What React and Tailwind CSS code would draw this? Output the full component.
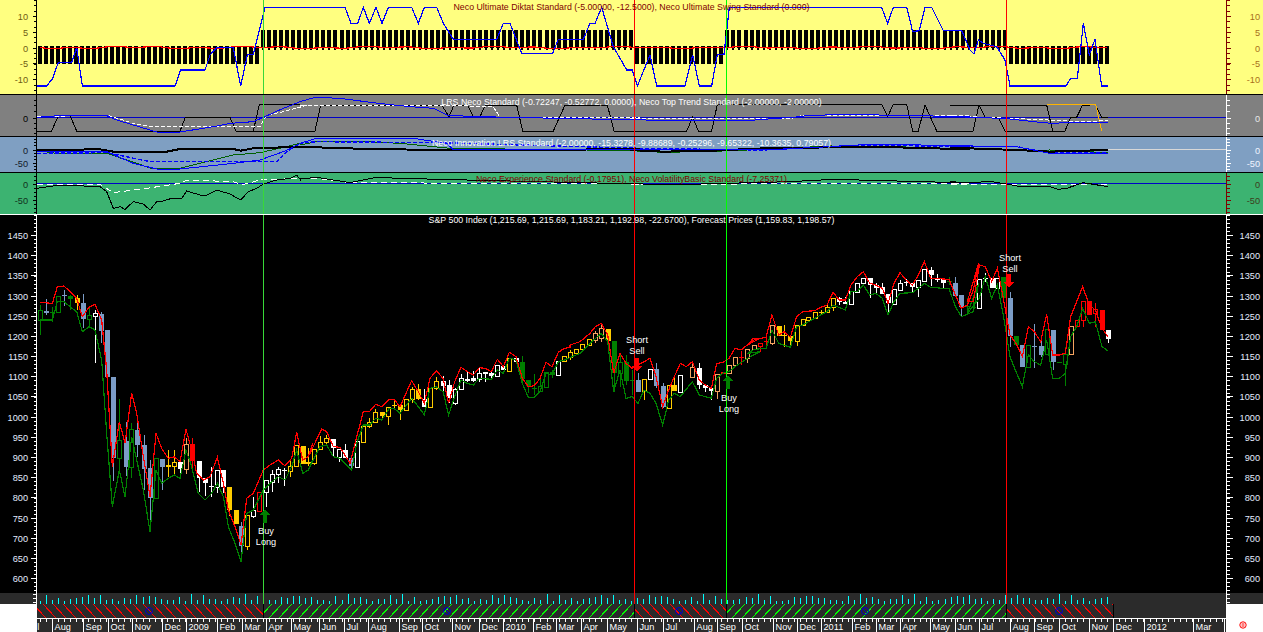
const pts = (ox, oy, a) => a.map(([x, y]) => `${ox + x / 3},${oy + y / 3}`).join(" ");

const VX = [[263, "#38d838"], [634, "#ff0000"], [726, "#00ff00"], [1006, "#ff0000"]];

const Candles = `40 G 310 320 305 335|46 s 311 313 299 315|52 g 312 313 307 322|58 G 296 312 296 312|64 s 295 296 290 306|70 g 296 299 295 310|77 y 298 303 295 310|83 s 303 319 294 328|89 G 315 319 307 328|95 W 313 316 310 363|101 s 314 331 312 343|107 s 330 377 330 377|113 s 377 458 377 481|119 G 440 458 399 470|126 s 441 467 422 476|131 G 429 467 423 478|137 s 430 445 423 457|144 s 445 469 435 490|150 s 468 498 460 522|156 G 458 498 458 498|162 s 459 467 459 490|168 y 465 467 450 477|174 Y 462 466 450 474|180 w 462 469 462 474|186 O 444 469 438 474|192 r 444 461 438 470|199 w 461 478 461 492|205 w 478 483 478 496|211 w 486 487 467 497|217 W 470 487 470 493|223 w 470 487 470 493|229 y 487 510 487 516|236 y 510 524 510 524|241 s 526 546 522 553|247 Y 515 546 515 550|253 W 510 516 497 518|259 R 492 511 492 511|266 W 480 492 480 507|272 W 474 482 470 492|278 W 469 474 467 483|284 w 470 470 468 486|290 Y 466 471 461 477|296 Y 445 466 445 466|303 y 446 464 446 464|308 y 462 464 448 466|314 Y 449 463 449 465|320 Y 442 449 436 449|326 Y 438 442 435 446|333 w 439 448 439 457|339 W 449 457 449 462|345 w 450 458 444 458|351 s 458 466 458 470|357 W 441 467 440 468|363 Y 426 442 426 442|369 Y 422 426 418 428|375 Y 412 422 409 423|382 y 412 416 412 420|388 Y 407 416 407 425|394 y 405 406 401 408|400 y 405 410 405 420|406 Y 399 410 399 410|412 Y 389 399 387 403|418 y 389 399 384 400|424 w 399 407 389 407|430 Y 388 407 388 407|436 Y 381 388 377 390|443 w 381 386 376 395|449 w 385 398 380 403|455 W 389 403 388 405|461 W 378 389 374 390|467 W 379 380 372 382|473 w 378 381 371 382|479 W 373 379 368 382|485 W 372 373 372 382|491 w 373 376 371 379|497 W 365 376 365 376|503 w 366 370 366 370|509 Y 358 371 358 371|516 w 358 362 356 363|522 g 362 379 356 384|528 g 380 386 380 393|534 g 388 389 374 395|540 G 386 391 378 392|546 G 372 387 372 387|552 g 372 375 370 378|558 W 361 375 361 375|564 Y 356 361 356 361|570 Y 352 357 350 360|576 Y 349 353 349 353|582 Y 344 349 344 349|589 Y 339 345 339 345|595 O 333 340 331 343|601 O 328 338 323 342|608 y 329 341 329 341|614 g 341 373 341 392|620 G 362 373 353 387|626 g 362 381 355 385|632 g 380 381 370 395|638 s 380 392 373 392|644 Y 379 391 379 400|650 W 369 379 369 379|656 s 369 386 363 388|663 s 386 407 383 408|669 Y 385 408 385 408|674 y 385 391 377 391|680 W 375 392 375 392|692 O 367 377 363 377|699 w 368 385 363 389|705 w 385 388 385 392|711 w 388 391 388 400|717 O 374 391 374 399|723 r 372 374 372 374|729 O 365 373 365 373|735 O 357 365 357 365|741 r 357 358 351 365|747 O 349 358 349 363|754 O 345 349 345 349|760 R 343 346 343 352|766 r 341 342 337 345|772 O 325 343 325 345|779 y 326 336 326 336|784 y 335 336 325 347|790 y 336 341 336 345|797 Y 325 341 325 346|803 Y 319 325 319 325|808 Y 317 320 317 320|815 Y 312 318 312 318|821 y 312 313 310 315|827 Y 307 312 303 312|833 Y 298 307 298 311|839 w 298 302 297 305|845 w 302 304 297 304|851 W 291 304 291 304|857 W 283 292 283 292|863 W 278 283 278 283|870 w 278 285 278 298|876 w 285 288 283 293|882 w 287 294 283 294|888 w 294 303 294 315|894 W 289 304 289 304|900 W 283 290 280 290|906 w 282 283 279 286|912 w 283 287 283 293|918 W 280 287 280 297|924 W 269 281 269 281|931 w 270 275 267 286|937 w 279 280 274 282|943 w 279 283 279 288|949 g 281 282 277 285|955 s 283 296 277 296|961 s 295 307 295 317|967 g 306 307 298 313|973 g 307 308 302 312|979 W 279 308 279 308|985 w 278 279 273 282|992 w 278 288 278 288|997 W 278 288 278 288|1003 g 277 298 277 298|1010 s 298 336 292 347|1016 g 336 345 336 345|1022 s 345 367 345 367|1028 G 345 367 345 367|1034 s 346 347 324 368|1041 s 346 355 337 357|1047 G 329 354 329 354|1053 s 330 362 330 370|1059 g 362 363 362 363|1065 G 354 364 347 386|1071 O 326 354 326 354|1077 R 320 326 320 326|1083 R 301 320 301 327|1089 r 301 315 301 315|1095 R 309 313 303 327|1102 r 310 330 310 330|1108 w 330 339 330 343`
  .split("|")
  .map((r) => r.split(" "))
  .map(([x, t, a, b, c, d]) => ({ x: +x, t, top: +a, bot: +b, wt: +c, wb: +d }));

const COL = { W: "#ffffff", w: "#ffffff", s: "#7b9cc6", g: "#008000", G: "#008000", y: "#ffcc00", Y: "#ffcc00", O: "#f4a460", r: "#ff0000", R: "#ff0000" };

const RED = [
  pts(40, 270, [[0,97],[37,100],[52,50],[72,48],[90,65],[110,85],[127,140],[147,112],[165,103],[185,150],[200,300],[217,590],[238,455],[255,520],[275,370],[290,430],[310,560],[330,680],[348,490],[365,535],[385,565],[403,560],[420,575],[438,478],[455,540],[470,610],[490,630],[510,620],[532,562],[550,640],[565,720],[585,770],[603,825],[620,685],[640,670],[670,600],[690,585],[715,570],[735,588],[755,565],[770,487],[788,570],[805,560],[818,520]]),
  pts(310, 320, [[0,400],[35,327],[50,335],[70,380],[90,382],[120,430],[135,370],[160,275],[178,275],[197,253],[215,260],[238,238],[252,238],[270,260],[305,182],[325,215],[343,250],[360,175],[379,152],[399,175],[416,250],[434,185],[453,142],[472,155],[490,165],[508,143],[526,145],[544,155],[562,118],[580,140],[598,97],[618,110],[637,175],[655,200],[673,197],[690,175],[708,127],[726,140],[745,97],[763,85],[780,82]]),
  pts(560, 310, [[30,105],[60,95],[90,70],[106,50],[124,40],[143,75],[161,190],[180,130],[198,160],[216,175],[234,165],[252,155],[270,145],[288,200],[308,290],[326,240],[343,200],[361,160],[379,170],[397,155],[418,210],[436,225],[454,235],[470,160],[488,158],[507,145],[525,115],[543,120],[562,105],[580,85],[600,85]]),
  pts(740, 250, [[22,285],[42,270],[78,262],[96,195],[116,255],[133,245],[151,262],[170,200],[188,185],[224,182],[242,172],[261,165],[279,127],[298,150],[316,150],[333,105],[352,80],[370,65],[389,100],[407,105],[427,115],[444,160],[462,100],[480,68],[498,90],[517,105],[535,75],[553,35],[572,85],[590,85],[608,87],[627,88],[646,135],[664,175],[682,165],[700,120],[716,40]]),
  pts(960, 240, [[22,185],[40,185],[58,75],[76,80],[95,125],[112,85],[130,175],[150,285],[168,310],[187,350],[205,260],[223,275],[242,305],[260,222],[278,345],[298,345],[316,340],[332,230],[350,185],[368,140],[388,195],[406,210],[426,265],[444,290]]),
].join(" ");

const GREEN = [
  pts(40, 270, [[0,150],[37,150],[52,95],[72,95],[90,110],[110,125],[127,185],[147,170],[165,180],[185,270],[200,490],[217,710],[238,600],[255,680],[275,500],[290,570],[310,660],[330,785],[348,600],[365,640],[385,625],[403,615],[420,625],[438,540],[455,590],[475,670],[495,690],[515,670],[532,640],[550,680],[565,770],[585,820],[603,875],[620,730],[640,720],[670,660],[690,640],[715,620],[735,630],[755,590],[770,540],[788,610],[805,600],[818,570]]),
  pts(310, 320, [[0,440],[30,380],[50,375],[70,410],[90,415],[125,450],[140,370],[160,315],[178,315],[197,295],[215,300],[238,265],[252,265],[270,280],[305,235],[325,260],[343,285],[360,205],[379,200],[399,215],[416,285],[434,230],[453,180],[472,190],[490,195],[508,175],[544,178],[562,150],[580,160],[598,115],[618,120],[637,190],[655,232],[673,232],[690,215],[708,160],[726,165],[745,125],[763,120]]),
  pts(560, 310, [[60,130],[90,100],[124,70],[143,95],[161,245],[180,180],[198,265],[216,260],[234,280],[252,240],[270,250],[288,280],[308,345],[326,270],[343,250],[361,260],[397,215],[418,255],[436,260],[454,265],[470,205],[488,190],[507,185],[525,170],[562,145],[600,125]]),
  pts(740, 250, [[22,310],[42,298],[78,295],[96,240],[116,280],[151,292],[170,230],[188,225],[224,205],[261,185],[279,165],[316,180],[333,125],[352,125],[370,105],[389,135],[407,130],[427,145],[444,195],[462,155],[480,130],[517,128],[535,115],[553,100],[572,112],[608,115],[627,115],[646,170],[664,200],[700,185],[716,100]]),
  pts(960, 240, [[22,220],[58,175],[76,110],[95,175],[112,135],[130,225],[150,350],[168,395],[187,440],[205,345],[223,365],[242,375],[260,300],[278,415],[298,415],[316,400],[332,290],[350,260],[368,205],[388,250],[406,245],[426,320],[444,333]]),
].join(" ");

const BLUE_Y = [
  pts(0, 0, [[110,258],[140,258],[158,235],[175,187],[215,187],[230,143],[247,258],[525,258],[542,210],[615,210],[630,165],[650,143],[700,143],[722,258],[742,165],[760,163],[795,22]]),
  pts(300, 0, [[135,22],[153,70],[173,70],[190,22],[208,70],[228,22],[246,70],[265,22],[335,22],[355,70],[373,22],[410,22],[430,70],[460,118],[590,118],[610,70],[630,70],[665,160],[758,160],[775,118],[850,118],[870,70],[885,70],[905,22],[940,140],[980,210],[997,210],[1012,258]]),
  pts(630, 0, [[22,258],[60,165],[80,258],[165,258],[188,165],[208,258],[245,258],[262,163],[282,163],[298,22],[755,22],[773,70],[790,22],[830,22],[848,95],[868,92],[885,22],[905,22],[940,92],[995,92]]),
  pts(950, 0, [[35,92],[60,150],[72,162],[85,120],[100,130],[140,140],[165,180],[180,258],[348,258],[362,235],[382,235],[400,70],[418,165],[435,118],[455,258],[473,258]]),
].join(" ");

const Line = ({ p, c, w = 1, dash }) => (
  <polyline points={p} fill="none" stroke={c} strokeWidth={w} strokeDasharray={dash} shapeRendering="crispEdges" />
);

const VLines = ({ y0, y1 }) => (
  <g shapeRendering="crispEdges">
    {VX.map(([x, c]) => (
      <line key={x} x1={x + 0.5} x2={x + 0.5} y1={y0} y2={y1} stroke={c} />
    ))}
  </g>
);

function Axis({ side, y0, h, line, label, major, minor, majorLen = 4, minorLen = 3 }) {
  const left = side === "left";
  const ax = left ? 36 : 1226;
  const dir = left ? -1 : 1;
  return (
    <svg className="block h-full w-[37px] shrink-0" viewBox={`${left ? 0 : 1226} ${y0} 37 ${h}`}>
      <g shapeRendering="crispEdges" stroke={line}>
        <line x1={ax + 0.5} x2={ax + 0.5} y1={y0} y2={y0 + h} />
        {minor.map((y) => (
          <line key={y} x1={ax + 0.5} x2={ax + 0.5 + dir * minorLen} y1={Math.round(y) + 0.5} y2={Math.round(y) + 0.5} />
        ))}
        {major.map(([t, y]) => (
          <line key={t} x1={ax + 0.5} x2={ax + 0.5 + dir * majorLen} y1={Math.round(y) + 0.5} y2={Math.round(y) + 0.5} />
        ))}
      </g>
      {major.map(([t, y]) => (
        <text key={t} x={left ? 28 : 1260} y={y + 4} textAnchor="end" fontSize="9.2" fill={label}>
          {t}
        </text>
      ))}
    </svg>
  );
}

const range = (a, b, s) => {
  const o = [];
  for (let v = a; v <= b; v += s) o.push(v);
  return o;
};

function Panel({ className, y0, h, title, titleCls, left, right, minor, major, children, majorLen, minorLen }) {
  return (
    <div className={`flex ${className}`}>
      <Axis side="left" y0={y0} h={h} line={left[0]} label={left[1]} major={major} minor={minor} majorLen={majorLen} minorLen={minorLen} />
      <div className="relative min-w-0 flex-1">
        <svg className="block h-full w-full" viewBox={`37 ${y0} 1189 ${h}`}>
          {children}
        </svg>
        <div className={`pointer-events-none absolute inset-x-0 top-0 whitespace-nowrap text-center text-[8.8px] leading-[12px] ${titleCls}`}>{title}</div>
      </div>
      <Axis side="right" y0={y0} h={h} line={right[0]} label={right[1]} major={major} minor={minor} majorLen={majorLen} minorLen={minorLen} />
    </div>
  );
}

const BARS = range(0, 177, 1).map((i) => 40 + 6.03 * i);
const isAbove = (x) => (x > 263 && x < 633) || (x > 727 && x < 1005);

function YellowChart() {
  const redWave = BARS.map((x, i) => `${x},${47.5 + (Math.sin(i * 0.9) + Math.sin(i * 0.31)) * 0.7}`).join(" ");
  return (
    <>
      <g shapeRendering="crispEdges" fill="#000">
        {BARS.map((x) => {
          const rx = Math.round(x) - 2;
          return isAbove(x) ? (
            <g key={x}>
              <rect x={rx} y={30} width={4} height={18} />
              <rect x={rx + 1} y={48} width={2} height={2} />
            </g>
          ) : (
            <rect key={x} x={rx} y={46} width={4} height={18} />
          );
        })}
      </g>
      <Line p={redWave} c="#ff0000" w={1.2} />
      <Line p={BLUE_Y} c="#0000ff" w={1.2} />
      <VLines y0={0} y1={94} />
    </>
  );
}

function GrayChart() {
  return (
    <>
      <line x1={37} x2={1226} y1={117.5} y2={117.5} stroke="#0000c8" shapeRendering="crispEdges" />
      <Line c="#000" p={pts(0, 0, [[110,393],[155,393],[175,347],[210,347],[230,393],[540,393],[556,352],[690,352],[708,393],[760,393],[778,313],[900,313]])} />
      <Line c="#000" p={pts(0, 0, [[760,393],[945,393],[962,315],[1325,315],[1347,350],[1362,315],[1403,315],[1420,350],[1440,350],[1456,315],[1550,315],[1568,393],[1660,393],[1695,315],[1822,315],[1842,393],[2060,393],[2078,352],[2095,393],[2135,393],[2152,313],[2645,313],[2663,350],[2680,313],[2720,313],[2738,393],[2755,393],[2775,315],[2810,393],[2919,393],[2937,315],[2955,352],[2995,352],[3015,393],[3155,393],[3158,393],[3195,393],[3212,352],[3230,352],[3248,315],[3270,315]])} />
      <Line c="#000" p={pts(950, 0, [[0,315],[290,315],[308,393]])} />
      <Line c="#000" p={pts(950, 0, [[437,315],[455,352],[473,352]])} />
      <Line c="#ffb400" p={pts(950, 0, [[290,313],[437,313],[455,393]])} />
      <Line c="#ffffff" dash="4 2" p={[pts(0, 0, [[110,350],[320,345],[400,370],[450,380],[780,380],[800,345],[850,335],[920,316]]), pts(300, 0, [[0,316],[430,316],[580,320],[600,352],[1020,352]]), pts(630, 0, [[0,356],[480,356],[510,348],[1020,347]]), pts(950, 0, [[0,347],[60,350],[250,358],[400,365],[473,362]])].join(" ")} />
      <Line c="#0000ff" p={[pts(0, 0, [[110,352],[175,347],[320,347],[350,360],[470,396],[540,396],[640,380],[690,370],[760,365],[790,352],[850,325],[900,305]]), pts(300, 0, [[0,305],[45,292],[120,295],[235,310],[330,320],[400,325],[440,345],[520,350],[540,350],[680,353],[1020,360]]), pts(630, 0, [[0,358],[95,362],[350,362],[440,355],[490,352],[530,347],[640,343],[850,347],[1020,350]]), pts(950, 0, [[0,350],[90,352],[180,357],[250,365],[305,370],[350,368],[473,368]])].join(" ")} />
      <VLines y0={95} y1={136} />
    </>
  );
}

function BlueChart() {
  return (
    <>
      <line x1={1108} x2={1226} y1={149.5} y2={149.5} stroke="#d8d8d8" shapeRendering="crispEdges" />
      <Line c="#006000" p={[pts(0, 0, [[110,452],[170,460],[320,460],[460,507],[540,505],[640,480],[700,465],[780,458],[860,440],[900,430]]), pts(300, 0, [[0,435],[50,425],[200,425],[300,430],[450,445],[1020,452]]), pts(630, 0, [[0,452],[100,457],[250,454],[400,448],[600,438],[800,440],[1020,448]]), pts(950, 0, [[0,442],[200,452],[300,450],[473,458]])].join(" ")} />
      <Line c="#0000ff" dash="4 2" w={1.4} p={[pts(0, 0, [[110,460],[320,458],[450,485],[830,485],[860,455],[900,430]]), pts(300, 0, [[0,430],[50,425],[420,428],[1020,445]]), pts(630, 0, [[0,445],[400,450],[700,435],[1020,440]]), pts(950, 0, [[0,438],[200,440],[300,458],[473,458]])].join(" ")} />
      <Line c="#000" w={2} p={[pts(0, 0, [[110,450],[300,448],[340,455],[500,455],[540,447],[700,447],[722,452],[760,445],[850,442],[900,440]]), pts(300, 0, [[0,440],[130,445],[400,450],[1020,448]]), pts(630, 0, [[0,450],[100,455],[250,452],[400,445],[600,442],[800,442],[1020,448]]), pts(950, 0, [[0,443],[200,450],[300,455],[473,450]])].join(" ")} />
      <Line c="#0000ff" p={[pts(0, 0, [[110,455],[320,455],[400,490],[470,507],[540,507],[700,490],[780,480],[850,455],[900,430]]), pts(300, 0, [[0,430],[50,415],[340,415],[440,430],[460,450],[1020,448]]), pts(630, 0, [[0,448],[400,450],[600,440],[720,433],[1020,437]]), pts(950, 0, [[0,437],[200,440],[300,460],[473,460]])].join(" ")} />
      <VLines y0={137} y1={172} />
    </>
  );
}

function GreenChart() {
  return (
    <>
      <line x1={37} x2={1226} y1={183.5} y2={183.5} stroke="#0000c8" shapeRendering="crispEdges" />
      <Line c="#ffffff" dash="6 4" p={[pts(0, 0, [[110,553],[300,553],[340,578],[440,565],[540,550],[560,540],[700,545],[725,555],[780,540],[900,535]]), pts(300, 0, [[0,535],[50,535],[150,548],[1020,552]]), pts(630, 0, [[0,553],[1020,550]]), pts(950, 0, [[0,553],[473,552]])].join(" ")} />
      <Line c="#000" p={[pts(0, 0, [[110,565],[180,555],[300,560],[320,575],[340,625],[360,620],[375,628],[400,605],[430,612],[450,630],[470,605],[490,603],[515,595],[545,595],[560,573],[600,585],[620,585],[650,570],[690,582],[722,600],[745,575],[770,565],[790,552],[830,540],[870,535],[890,525],[900,538]]), pts(300, 0, [[0,537],[50,532],[150,548],[230,532],[300,535],[500,540],[1020,552]]), pts(630, 0, [[0,550],[100,555],[480,545],[610,538],[990,548]]), pts(950, 0, [[0,543],[30,548],[125,545],[170,552],[210,560],[300,560],[325,568],[350,565],[400,548],[473,560]])].join(" ")} />
      <VLines y0={173} y1={214} />
    </>
  );
}

const Up = ({ x, y, c = "#008000" }) => (
  <polygon points={`${x},${y} ${x + 5},${y + 6} ${x + 2},${y + 6} ${x + 2},${y + 14} ${x - 2},${y + 14} ${x - 2},${y + 6} ${x - 5},${y + 6}`} fill={c} shapeRendering="crispEdges" />
);
const Down = ({ x, y, c = "#ff0000" }) => (
  <polygon points={`${x},${y} ${x + 5},${y - 6} ${x + 2},${y - 6} ${x + 2},${y - 14} ${x - 2},${y - 14} ${x - 2},${y - 6} ${x - 5},${y - 6}`} fill={c} shapeRendering="crispEdges" />
);

const Note = ({ x, y, a, b }) => (
  <g fontSize="9.2" fill="#ffffff" textAnchor="middle">
    <text x={x} y={y}>{a}</text>
    <text x={x} y={y + 11}>{b}</text>
  </g>
);

function MainChart() {
  return (
    <>
      <g shapeRendering="crispEdges">
        {Candles.map((k, i) => {
          const col = COL[k.t];
          const hollow = "WGYOR".includes(k.t);
          const h = Math.max(1, k.bot - k.top);
          return (
            <g key={i}>
              <line x1={k.x + 0.5} x2={k.x + 0.5} y1={k.wt} y2={k.wb} stroke={col} />
              {hollow ? (
                <rect x={k.x - 1.5} y={k.top + 0.5} width={4} height={h} fill="#000" stroke={col} />
              ) : (
                <rect x={k.x - 2} y={k.top} width={5} height={h} fill={col} />
              )}
            </g>
          );
        })}
      </g>
      <Line p={GREEN} c="#008000" w={1.2} />
      <Line p={RED} c="#ff0000" w={1.2} />
      <VLines y0={215} y1={593} />
      <Up x={265} y={509} />
      <Note x={266} y={534} a="Buy" b="Long" />
      <Down x={637} y={372} />
      <Note x={637} y={343} a="Short" b="Sell" />
      <Up x={728} y={375} />
      <Note x={729} y={401} a="Buy" b="Long" />
      <Down x={1009} y={288} />
      <Note x={1010} y={261} a="Short" b="Sell" />
    </>
  );
}

const ZONES = [
  [37, 263, "r"],
  [263, 634, "g"],
  [634, 726, "r"],
  [726, 1006, "g"],
  [1006, 1113, "r"],
];

const cyanH = (i) => Math.round(3 + Math.abs(Math.sin(i * 1.7) * Math.cos(i * 0.37)) * 7);

function Strip() {
  return (
    <svg className="block h-[25px] w-full" viewBox="37 593 1189 25">
      <g shapeRendering="crispEdges">
        {BARS.map((x, i) => (
          <line key={x} x1={x + 0.5} x2={x + 0.5} y1={604 - cyanH(i)} y2={604} stroke="#00ffff" />
        ))}
        {ZONES.map(([a, b, t]) => (
          <svg key={a} x={a} y={604} width={b - a} height={14} viewBox={`${a} 604 ${b - a} 14`}>
            {range(a - 14, b + 14, 10).map((x) =>
              t === "r" ? (
                <line key={x} x1={x} y1={604} x2={x + 13} y2={618} stroke="#ff0000" />
              ) : (
                <line key={x} x1={x + 13} y1={604} x2={x} y2={618} stroke="#00ff00" />
              )
            )}
          </svg>
        ))}
        {[263, 634, 726, 1006, 1113].map((x) => (
          <line key={x} x1={x + 0.5} x2={x + 0.5} y1={604} y2={618} stroke="#000" />
        ))}
      </g>
      <VLines y0={593} y1={604} />
      {[149, 447, 679, 865, 1059].map((x) => (
        <g key={x} fill="none" stroke="#0000c8">
          <circle cx={x} cy={611} r={3.5} />
          <line x1={x - 2} y1={609} x2={x + 2} y2={613} />
        </g>
      ))}
    </svg>
  );
}

const MONTHS = [
  ["Jul", 25], ["Aug", 52], ["Sep", 83], ["Oct", 108], ["Nov", 132], ["Dec", 162], ["2009", 186], ["Feb", 217], ["Mar", 242], ["Apr", 266], ["May", 291],
  ["Jun", 319], ["Jul", 344], ["Aug", 368], ["Sep", 399], ["Oct", 422], ["Nov", 452], ["Dec", 479], ["2010", 503], ["Feb", 533], ["Mar", 556], ["Apr", 581], ["May", 607],
  ["Jun", 637], ["Jul", 663], ["Aug", 694], ["Sep", 717], ["Oct", 742], ["Nov", 773], ["Dec", 797], ["2011", 821], ["Feb", 852], ["Mar", 876], ["Apr", 900], ["May", 930],
  ["Jun", 955], ["Jul", 979], ["Aug", 1010], ["Sep", 1034], ["Oct", 1059], ["Nov", 1089], ["Dec", 1113], ["2012", 1144], ["Mar", 1193], ["", 1224],
];

function TimeAxis() {
  return (
    <svg className="block h-[14px] w-full" viewBox="37 618 1189 14">
      <g shapeRendering="crispEdges" stroke="#ffffff">
        <line x1={37} x2={1226} y1={618.5} y2={618.5} />
        {range(0, 197, 1).map((i) => {
          const x = Math.round(40 + 6.03 * i) + 0.5;
          return <line key={i} x1={x} x2={x} y1={619} y2={622} />;
        })}
        {MONTHS.map(([m, x]) => (
          <line key={x} x1={x + 0.5} x2={x + 0.5} y1={619} y2={632} />
        ))}
      </g>
      {MONTHS.map(([m, x]) => (
        <text key={x} x={x + 2.5} y={630} fontSize="9.2" fill="#ffffff">
          {m}
        </text>
      ))}
    </svg>
  );
}

const MainMajor = range(0, 17, 1).map((i) => [String(1450 - i * 50), 235 + i * 20.18]);
const MainMinor = range(215, 593, 4.036);

export default function App() {
  return (
    <div className="flex h-[632px] w-[1263px] flex-col overflow-hidden bg-black [font-family:'Liberation_Sans',Arial,sans-serif]">
      <Panel
        className="h-[95px] border-b border-black bg-[#ffff80]"
        y0={0}
        h={94}
        title="Neco Ultimate Diktat Standard (-5.00000, -12.5000), Neco Ultimate Swing Standard (0.000)"
        titleCls="mt-px text-[#800000]"
        left={["#000000", "#6e5c14"]}
        right={["#800000", "#a8701c"]}
        major={[["10", 16], ["5", 32], ["0", 48], ["-5", 63], ["-10", 79]]}
        minor={range(0, 94, 5.3)}
      >
        <YellowChart />
      </Panel>
      <Panel
        className="h-[42px] border-b border-black bg-[#808080]"
        y0={95}
        h={41}
        title="LRS Neco Standard (-0.72247, -0.52772, 0.0000), Neco Top Trend Standard (-2.00000, -2.00000)"
        titleCls="mt-px text-white"
        left={["#000000", "#000000"]}
        right={["#ffffff", "#e8e8e8"]}
        major={[["0", 117.5]]}
        minor={[100, 105, 111, 123, 128, 133]}
      >
        <GrayChart />
      </Panel>
      <Panel
        className="h-[36px] border-b border-black bg-[#7f9fc2]"
        y0={137}
        h={35}
        title="Neco Innovation LRS Standard (-2.00000, -15.3278, -9.88689, -0.25296, -9.65322, -10.3635, 0.79057)"
        titleCls="text-white"
        left={["#000000", "#101828"]}
        right={["#ffffff", "#f0f4ff"]}
        major={[["0", 150], ["-50", 163]]}
        minor={[139, 142, 145, 153, 156, 159, 166, 169]}
      >
        <BlueChart />
      </Panel>
      <Panel
        className="h-[42px] border-b border-white bg-[#3cb371]"
        y0={173}
        h={41}
        title="Neco Experience Standard (-0.17951), Neco VolatilityBasic Standard (-7.25371)"
        titleCls="text-[#800000]"
        left={["#000000", "#10301c"]}
        right={["#800000", "#3c3c1c"]}
        major={[["0", 184], ["-50", 200]]}
        minor={[176, 180, 188, 192, 196, 204, 208, 212]}
      >
        <GreenChart />
      </Panel>
      <Panel
        className="h-[378px] bg-black"
        y0={215}
        h={378}
        title="S&P 500 Index (1,215.69, 1,215.69, 1,183.21, 1,192.98, -22.6700), Forecast Prices (1,159.83, 1,198.57)"
        titleCls="-mt-px text-white"
        left={["#ffffff", "#e4ecff"]}
        right={["#ffffff", "#e4ecff"]}
        major={MainMajor}
        minor={MainMinor}
        majorLen={6}
      >
        <MainChart />
      </Panel>
      <div className="flex min-h-0 flex-1">
        <div className="flex w-[37px] shrink-0 flex-col bg-white">
          <svg className="block h-[11px] w-full bg-[#2b2b2b]" viewBox="0 593 37 11">
            <g stroke="#ffffff" shapeRendering="crispEdges">
              <line x1={36.5} x2={36.5} y1={593} y2={604} />
              {[594, 598, 602].map((y) => (
                <line key={y} x1={33} x2={36} y1={y + 0.5} y2={y + 0.5} />
              ))}
            </g>
          </svg>
        </div>
        <div className="flex min-w-0 flex-1 flex-col bg-[#2b2b2b]">
          <Strip />
          <TimeAxis />
        </div>
        <div className="flex w-[37px] shrink-0 flex-col bg-white">
          <svg className="block h-[11px] w-full bg-[#2b2b2b]" viewBox="1226 593 37 11">
            <g stroke="#ffffff" shapeRendering="crispEdges">
              <line x1={1226.5} x2={1226.5} y1={593} y2={604} />
              {[594, 598, 602].map((y) => (
                <line key={y} x1={1227} x2={1230} y1={y + 0.5} y2={y + 0.5} />
              ))}
            </g>
          </svg>
          <svg className="mt-[17px] ml-[13px] block h-[8px] w-[8px]" viewBox="0 0 8 8" fill="none" stroke="#ff0000">
            <circle cx={4} cy={4} r={3.2} />
            <line x1={2.5} y1={3} x2={5.5} y2={3} />
            <line x1={2.5} y1={5} x2={5.5} y2={5} />
          </svg>
        </div>
      </div>
    </div>
  );
}
